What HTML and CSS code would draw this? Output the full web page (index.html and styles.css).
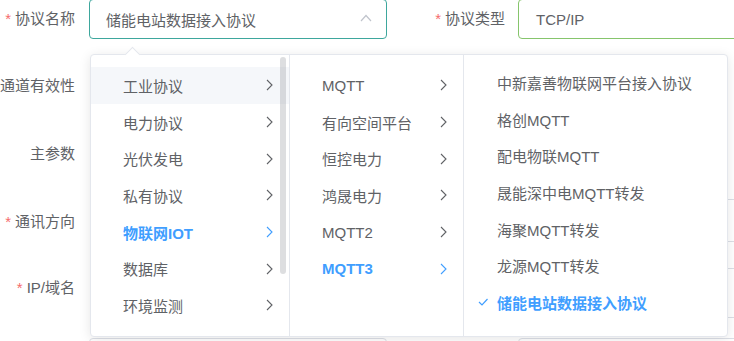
FILE: index.html
```html
<!DOCTYPE html>
<html lang="zh-CN">

<head>
    <meta charset="UTF-8">
    <title>协议配置</title>
    <link rel="stylesheet" href="styles.css">
</head>

<body>
    <form class="form">
        <div class="row row-1">
            <label class="label"><span class="req">*</span>协议名称</label>
            <div class="input is-focus">
                <span class="input-text">储能电站数据接入协议</span>
                <svg class="input-arrow" width="12" height="8" viewBox="0 0 12 8">
                    <polyline points="1,7 6,1.5 11,7" fill="none" stroke="#c0c4cc" stroke-width="1.2" />
                </svg>
            </div>
            <label class="label label-2"><span class="req">*</span>协议类型</label>
            <div class="input input-2 is-valid">
                <span class="input-text">TCP/IP</span>
            </div>
        </div>

        <div class="row row-2">
            <label class="label">通道有效性</label>
        </div>

        <div class="row row-3">
            <label class="label">主参数</label>
        </div>

        <div class="row row-4">
            <label class="label"><span class="req">*</span>通讯方向</label>
            <div class="input is-covered"></div>
            <label class="label label-2"></label>
            <div class="input input-2"></div>
        </div>

        <div class="row row-5">
            <label class="label"><span class="req">*</span>IP/域名</label>
            <div class="input is-covered"></div>
            <label class="label label-2"></label>
            <div class="input input-2"></div>
        </div>

        <div class="row row-6">
            <label class="label"></label>
            <div class="input"></div>
            <label class="label label-2"></label>
            <div class="input input-2"></div>
        </div>
    </form>

    <!-- cascader dropdown -->
    <div class="cascader-panel">
        <span class="popper-arrow"></span>

        <div class="menu menu-1">
            <ul class="menu-list">
                <li class="node is-hover">工业协议 <svg class="chev" width="7" height="12" viewBox="0 0 7 12"><polyline points="1,1 6,6 1,11" /></svg></li>
                <li class="node">电力协议 <svg class="chev" width="7" height="12" viewBox="0 0 7 12"><polyline points="1,1 6,6 1,11" /></svg></li>
                <li class="node">光伏发电 <svg class="chev" width="7" height="12" viewBox="0 0 7 12"><polyline points="1,1 6,6 1,11" /></svg></li>
                <li class="node">私有协议 <svg class="chev" width="7" height="12" viewBox="0 0 7 12"><polyline points="1,1 6,6 1,11" /></svg></li>
                <li class="node is-active">物联网IOT <svg class="chev" width="7" height="12" viewBox="0 0 7 12"><polyline points="1,1 6,6 1,11" /></svg></li>
                <li class="node">数据库 <svg class="chev" width="7" height="12" viewBox="0 0 7 12"><polyline points="1,1 6,6 1,11" /></svg></li>
                <li class="node">环境监测 <svg class="chev" width="7" height="12" viewBox="0 0 7 12"><polyline points="1,1 6,6 1,11" /></svg></li>
            </ul>
            <span class="scroll-thumb"></span>
        </div>

        <div class="menu menu-2">
            <ul class="menu-list">
                <li class="node">MQTT <svg class="chev" width="7" height="12" viewBox="0 0 7 12"><polyline points="1,1 6,6 1,11" /></svg></li>
                <li class="node">有向空间平台 <svg class="chev" width="7" height="12" viewBox="0 0 7 12"><polyline points="1,1 6,6 1,11" /></svg></li>
                <li class="node">恒控电力 <svg class="chev" width="7" height="12" viewBox="0 0 7 12"><polyline points="1,1 6,6 1,11" /></svg></li>
                <li class="node">鸿晟电力 <svg class="chev" width="7" height="12" viewBox="0 0 7 12"><polyline points="1,1 6,6 1,11" /></svg></li>
                <li class="node">MQTT2 <svg class="chev" width="7" height="12" viewBox="0 0 7 12"><polyline points="1,1 6,6 1,11" /></svg></li>
                <li class="node is-active">MQTT3 <svg class="chev" width="7" height="12" viewBox="0 0 7 12"><polyline points="1,1 6,6 1,11" /></svg></li>
            </ul>
        </div>

        <div class="menu menu-3">
            <ul class="menu-list">
                <li class="node">中新嘉善物联网平台接入协议</li>
                <li class="node">格创MQTT</li>
                <li class="node">配电物联MQTT</li>
                <li class="node">晟能深中电MQTT转发</li>
                <li class="node">海聚MQTT转发</li>
                <li class="node">龙源MQTT转发</li>
                <li class="node is-active">
                    <svg class="check" width="10" height="8" viewBox="0 0 10 8"><polyline points="1,4 4,7 9.5,1" /></svg>
                    储能电站数据接入协议
                </li>
            </ul>
        </div>
    </div>
</body>

</html>
```

FILE: styles.css
```css
html,
body {
    margin: 0;
    height: 100%;
    overflow: hidden;
}

body {
    position: relative;
    background: #fff;
    font-family: "Liberation Sans", "Noto Sans CJK SC", sans-serif;
    font-size: 15px;
    color: #606266;
}

ul {
    list-style: none;
    margin: 0;
    padding: 0;
}

/* ---------- form behind ---------- */

.form {
    margin-top: -1px;
}

.row {
    display: flex;
    align-items: stretch;
    height: 40px;
}

.row-1 { margin-bottom: 27px; }
.row-2 { margin-bottom: 28px; }
.row-3 { margin-bottom: 25px; }
.row-4 { height: 43px; margin-bottom: 26px; }
.row-5 { height: 50px; margin-bottom: 20px; }

.label {
    flex: none;
    box-sizing: border-box;
    width: 89px;
    padding-right: 14px;
    text-align: right;
    line-height: 40px;
    white-space: nowrap;
    overflow: visible;
    direction: rtl;
}

.label,
.label .req {
    unicode-bidi: plaintext;
}

.row-4 .label { line-height: 46px; }

.req {
    color: #f56c6c;
    margin-right: 4px;
}

.label-2 {
    width: 131px;
    padding-right: 13px;
}

.input {
    flex: none;
    position: relative;
    box-sizing: border-box;
    width: 298px;
    border: 1px solid #dcdfe6;
    border-radius: 4px;
    display: flex;
    align-items: center;
    padding-left: 16px;
}

.input-2 {
    width: 260px;
    padding-left: 17px;
}

.input.is-focus {
    border-color: #3ea79d;
}

.input.is-valid {
    border-color: #86c56c;
}

.input.is-covered {
    border-color: transparent;
}

.input-arrow {
    position: absolute;
    right: 14px;
    top: 14px;
}

/* ---------- cascader dropdown ---------- */

.cascader-panel {
    position: absolute;
    left: 90px;
    top: 54px;
    width: 638px;
    height: 283px;
    box-sizing: border-box;
    display: flex;
    background: #fff;
    border: 1px solid #e4e7ed;
    border-radius: 4px;
    box-shadow: 0 2px 12px rgba(0, 0, 0, 0.1);
}

.popper-arrow {
    position: absolute;
    top: -6px;
    left: 36px;
    width: 10px;
    height: 10px;
    background: #fff;
    border-top: 1px solid #e4e7ed;
    border-left: 1px solid #e4e7ed;
    transform: rotate(45deg);
}

.menu {
    position: relative;
    flex: none;
    overflow: hidden;
    border-right: 1px solid #e4e7ed;
}

.menu-1 { width: 198px; }
.menu-2 { width: 173px; }
.menu-3 { flex: 1; border-right: none; }

.menu-list {
    padding-top: 12px;
}

.menu-3 .menu-list {
    padding-top: 9px;
}

.node {
    position: relative;
    display: flex;
    align-items: center;
    justify-content: space-between;
    height: 36.7px;
    padding: 0 16px 0 32px;
    white-space: nowrap;
}

.menu-3 .node {
    padding-left: 33px;
}

.node.is-hover {
    background: #f5f7fa;
}

.node.is-active {
    color: #409eff;
    font-weight: bold;
}

.chev polyline {
    fill: none;
    stroke: #606266;
    stroke-width: 1.1;
}

.node.is-active .chev polyline {
    stroke: #409eff;
}

.check {
    position: absolute;
    left: 14px;
    top: 14px;
}

.check polyline {
    fill: none;
    stroke: #409eff;
    stroke-width: 1.2;
}

.scroll-thumb {
    position: absolute;
    right: 3px;
    top: 2px;
    width: 6px;
    height: 217px;
    border-radius: 4px;
    background: rgba(144, 147, 153, 0.3);
}
```
